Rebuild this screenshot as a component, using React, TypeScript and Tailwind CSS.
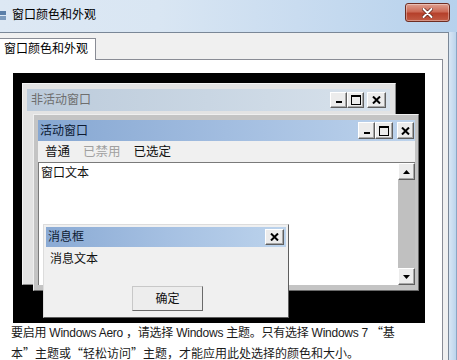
import React from "react";

const FONT = "font-['Noto_Sans','Noto_Sans_CJK_SC',sans-serif]";

function MinGlyph() {
  return (
    <svg width="8" height="8" viewBox="0 0 8 8">
      <rect x="1" y="5" width="6" height="2" fill="#000" />
    </svg>
  );
}
function MaxGlyph() {
  return (
    <svg width="10" height="10" viewBox="0 0 10 10">
      <rect x="0.5" y="0.5" width="9" height="9" fill="none" stroke="#000" strokeWidth="1" />
      <rect x="0" y="0" width="10" height="2" fill="#000" />
    </svg>
  );
}
function CloseGlyph() {
  return (
    <svg width="9" height="8" viewBox="0 0 9 8">
      <path d="M1 0.5 L8 7.5 M8 0.5 L1 7.5" stroke="#000" strokeWidth="2" />
    </svg>
  );
}
function UpArrow() {
  return (
    <svg width="7" height="4" viewBox="0 0 7 4">
      <path d="M0 4 L3.5 0 L7 4 Z" fill="#000" />
    </svg>
  );
}
function DownArrow() {
  return (
    <svg width="7" height="4" viewBox="0 0 7 4">
      <path d="M0 0 L3.5 4 L7 0 Z" fill="#000" />
    </svg>
  );
}

const btn3d =
  "flex items-center justify-center bg-[#ececec] border border-t-white border-l-white border-r-[#5f5f5f] border-b-[#5f5f5f] shadow-[inset_-1px_-1px_0_#a8a8a8]";

const CJK = "font-['Noto_Sans_CJK_SC',sans-serif]";

export default function App() {
  return (
    <div className={`w-[457px] h-[360px] overflow-hidden flex flex-col bg-[#c6dbf0] ${FONT}`}>
      {/* Outer title bar */}
      <div className="h-[32px] shrink-0 flex items-start bg-[linear-gradient(90deg,#dde8f4_0%,#d9e6f3_35%,#c9dcf0_65%,#b6d1ec_100%)]">
        <div className="mt-[11px] w-[6px] h-[9px] flex flex-col gap-[1px]">
          <div className="h-[4px] bg-[#5b7fa8]" />
          <div className="h-[4px] bg-[#7d9bbd]" />
        </div>
        <span className="ml-[6px] mt-[6px] text-[12px] leading-[18px] text-black">窗口颜色和外观</span>
        <div className="ml-auto mt-[3px] mr-[7px] w-[45px] h-[19px] rounded-[3px] border border-[#6e2d22] bg-[linear-gradient(180deg,#dfa090_0%,#cc6a56_45%,#b5402b_55%,#c25c45_100%)] flex items-center justify-center shadow-[inset_0_0_0_1px_rgba(255,255,255,0.35)]">
          <svg width="11" height="10" viewBox="0 0 11 10">
            <path d="M1.5 1 L9.5 9 M9.5 1 L1.5 9" stroke="#5a1f14" strokeWidth="3.4" strokeLinecap="round" />
            <path d="M1.5 1 L9.5 9 M9.5 1 L1.5 9" stroke="#fff" strokeWidth="2" strokeLinecap="round" />
          </svg>
        </div>
      </div>

      {/* Body */}
      <div className="flex flex-1 min-h-0">
        <div className="w-[449px] shrink-0 bg-[#f0f0f0] border-t border-r border-[#7a8797] flex flex-col">
          {/* Tab strip */}
          <div className="pt-[5px] flex relative z-10">
            <div className="w-[96px] h-[22px] -mb-px bg-white border-t border-r border-[#898c95] text-[12px] leading-[20px] pl-[4px] text-black">
              窗口颜色和外观
            </div>
          </div>
          {/* Panel */}
          <div className="w-[443px] flex-1 bg-white border-t border-r border-[#898c95] flex flex-col">
            <div className="ml-[13px] mt-[13px] w-[412px] h-[250px] shrink-0 bg-black relative">
              {/* Inactive window */}
              <div className="absolute left-[9px] top-[10px] w-[374px] h-[202px] bg-[#e3e3e3] border border-t-[#f4f4f4] border-l-[#f4f4f4] border-r-[#8a8a8a] border-b-[#8a8a8a] pt-[5px] pl-[4px] pr-[5px]">
                <div className="h-[22px] flex items-center bg-[linear-gradient(90deg,#bccbdb_0%,#c9d6e3_50%,#d8e2ec_100%)] pl-[4px] pr-[4px]">
                  <span className="text-[12px] leading-[16px] text-[#6e6e6e]">非活动窗口</span>
                  <div className="ml-auto flex items-center">
                    <div className={`${btn3d} w-[17px] h-[16px]`}><MinGlyph /></div>
                    <div className={`${btn3d} w-[17px] h-[16px]`}><MaxGlyph /></div>
                    <div className={`${btn3d} ml-[3px] w-[19px] h-[16px]`}><CloseGlyph /></div>
                  </div>
                </div>
              </div>

              {/* Active window */}
              <div className="absolute left-[20px] top-[41px] w-[386px] h-[177px] bg-[#c4c4c4] border border-t-[#efefef] border-l-[#efefef] border-r-[#6a6a6a] border-b-[#6a6a6a] pt-[5px] pl-[4px] pr-[3px] flex flex-col">
                <div className="h-[21px] shrink-0 flex items-center bg-[linear-gradient(90deg,#86a7d2_0%,#a2bde0_50%,#bdd3ec_100%)] pl-[2px] pr-[1px]">
                  <span className="text-[12px] leading-[16px] text-[#0d1a33]">活动窗口</span>
                  <div className="ml-auto flex items-center">
                    <div className={`${btn3d} w-[17px] h-[17px]`}><MinGlyph /></div>
                    <div className={`${btn3d} w-[18px] h-[17px]`}><MaxGlyph /></div>
                    <div className={`${btn3d} ml-[4px] w-[17px] h-[17px]`}><CloseGlyph /></div>
                  </div>
                </div>
                <div className="h-[21px] shrink-0 bg-[#f0f0f0] flex items-center text-[12.5px] leading-[16px] pl-[7px]">
                  <span className="text-[#111]">普通</span>
                  <span className="ml-[13px] text-[#a0a0a0]">已禁用</span>
                  <span className="ml-[13px] text-[#111]">已选定</span>
                </div>
                <div className="h-[123px] shrink-0 flex bg-white border-t border-l border-[#7a7a7a]">
                  <div className="flex-1 pl-[2px] pt-px text-[12px] leading-[18px] text-[#111]">窗口文本</div>
                  <div className="w-[17px] flex flex-col bg-[#c0c0c0]">
                    <div className={`${btn3d} w-[17px] h-[17px]`}><UpArrow /></div>
                    <div className="flex-1" />
                    <div className={`${btn3d} w-[17px] h-[17px]`}><DownArrow /></div>
                  </div>
                </div>
              </div>

              {/* Message box */}
              <div className="absolute left-[30px] top-[151px] w-[246px] h-[94px] bg-[#f0f0f0] border border-t-[#dcdcdc] border-l-[#dcdcdc] border-r-[#5e5e5e] border-b-[#5e5e5e] pt-[2px] pl-[2px] pr-[2px] flex flex-col">
                <div className="h-[20px] shrink-0 flex items-center bg-[linear-gradient(90deg,#8aaad4_0%,#a5c0e2_50%,#bcd3ec_100%)] pl-[2px] pr-[2px]">
                  <span className="text-[12px] leading-[16px] text-[#0d1a33]">消息框</span>
                  <div className={`${btn3d} ml-auto w-[19px] h-[16px]`}><CloseGlyph /></div>
                </div>
                <div className="pl-[4px] pt-[3px] text-[12px] leading-[18px] text-[#111]">消息文本</div>
                <div className="ml-[86px] mt-[18px] w-[71px] h-[25px] bg-[#ededed] border border-t-[#c8c8c8] border-l-[#c8c8c8] border-r-[#6a6a6a] border-b-[#6a6a6a] flex items-center justify-center text-[12px] text-[#111]">
                  确定
                </div>
              </div>
            </div>
            <div className="-mt-px pl-[11px] pr-[2px] text-[12px] leading-[20px] text-[#1a1a1a] whitespace-nowrap font-['Liberation_Sans','Noto_Sans_CJK_SC',sans-serif]">
              <div className="tracking-[-0.25px]">
                要启用 Windows Aero ，请选择 Windows 主题。只有选择 Windows 7 <span className={CJK}>“</span>基
              </div>
              <div>
                本<span className={CJK}>”</span>主题或<span className={CJK}>“</span>轻松访问<span className={CJK}>”</span>主题，才能应用此处选择的颜色和大小。
              </div>
            </div>
          </div>
        </div>
        <div className="flex-1 bg-[linear-gradient(90deg,#d8e6f4,#bcd4ec)] border-r border-[#8aa6c4]" />
      </div>
    </div>
  );
}
